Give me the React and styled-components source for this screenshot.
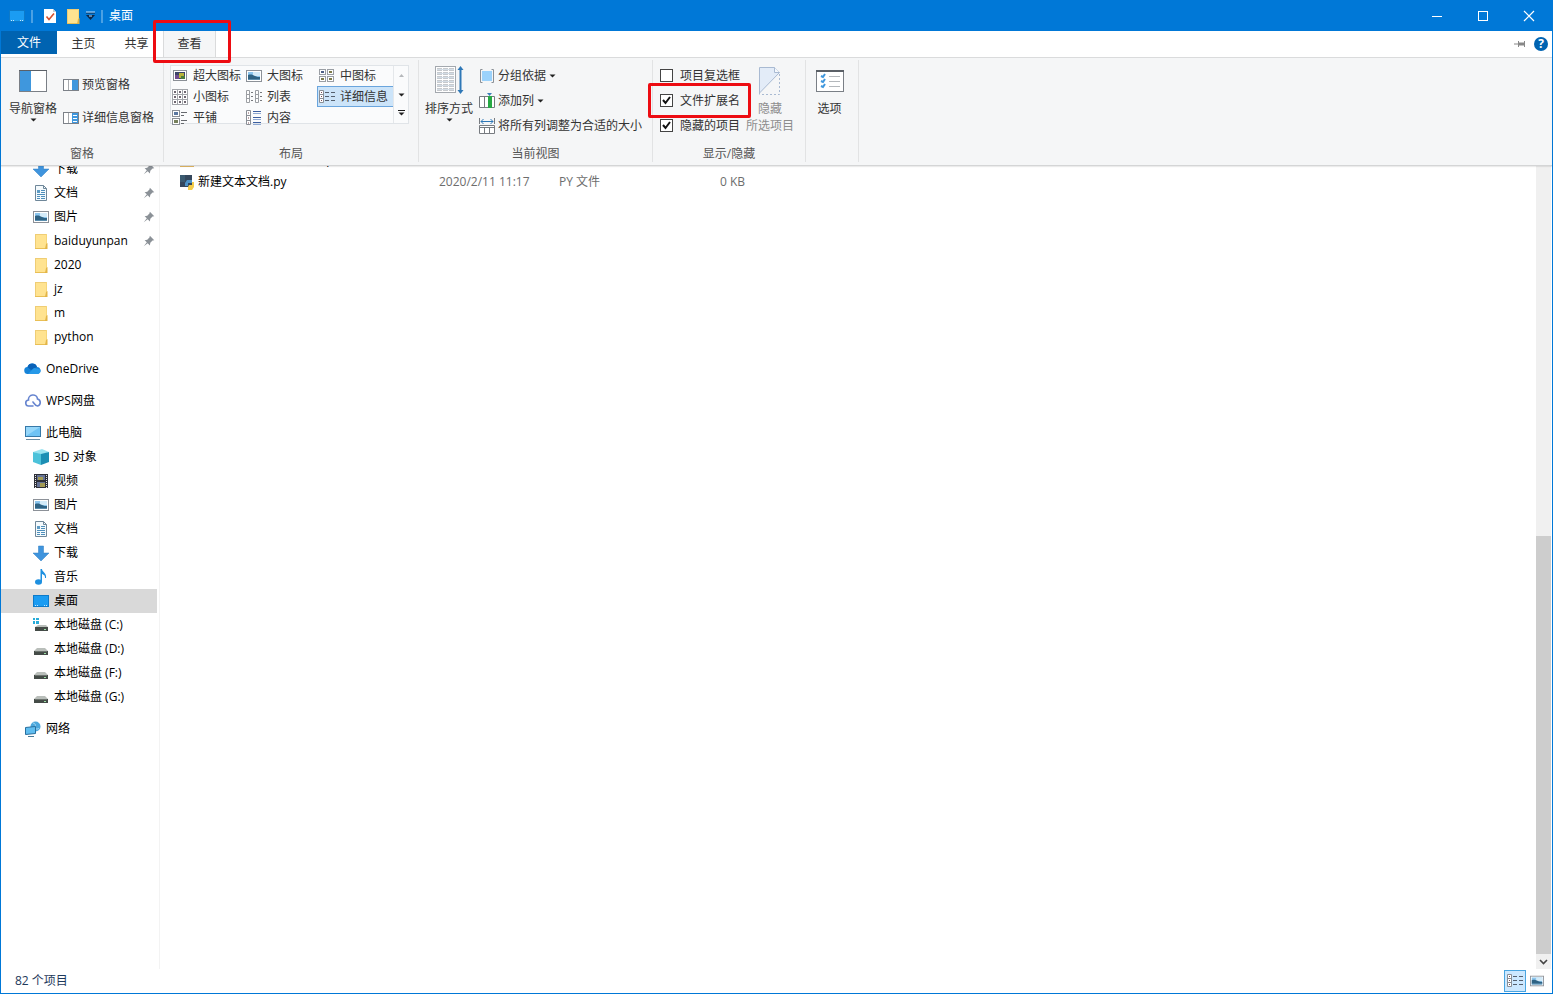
import { useState } from 'react';
import styled, { createGlobalStyle } from 'styled-components';

const views = [
    { id: 'huge', label: '超大图标', icon: 'picture' },
    { id: 'large', label: '大图标', icon: 'landscape' },
    { id: 'medium', label: '中图标', icon: 'medium' },
    { id: 'small', label: '小图标', icon: 'small' },
    { id: 'list', label: '列表', icon: 'list' },
    { id: 'details', label: '详细信息', icon: 'details' },
    { id: 'tiles', label: '平铺', icon: 'tiles' },
    { id: 'content', label: '内容', icon: 'content' },
];

const navGroups = [
    [
        { label: '下载', icon: 'download', pinned: true, child: true },
        { label: '文档', icon: 'document', pinned: true, child: true },
        { label: '图片', icon: 'landscape', pinned: true, child: true },
        { label: 'baiduyunpan', icon: 'folder', pinned: true, child: true },
        { label: '2020', icon: 'folder', child: true },
        { label: 'jz', icon: 'folder', child: true },
        { label: 'm', icon: 'folder', child: true },
        { label: 'python', icon: 'folder', child: true },
    ],
    [{ label: 'OneDrive', icon: 'onedrive' }],
    [{ label: 'WPS网盘', icon: 'wps' }],
    [
        { label: '此电脑', icon: 'computer' },
        { label: '3D 对象', icon: 'cube', child: true },
        { label: '视频', icon: 'video', child: true },
        { label: '图片', icon: 'landscape', child: true },
        { label: '文档', icon: 'document', child: true },
        { label: '下载', icon: 'download', child: true },
        { label: '音乐', icon: 'music', child: true },
        { label: '桌面', icon: 'desktop', child: true, active: true },
        { label: '本地磁盘 (C:)', icon: 'systemDisk', child: true },
        { label: '本地磁盘 (D:)', icon: 'disk', child: true },
        { label: '本地磁盘 (F:)', icon: 'disk', child: true },
        { label: '本地磁盘 (G:)', icon: 'disk', child: true },
    ],
    [{ label: '网络', icon: 'network' }],
];

const files = [
    {
        name: '学习资料汇总2_demo.zip',
        icon: 'zip',
        date: '2020/2/10 20:45',
        type: 'ZIP 压缩文件',
        size: '6,201 KB',
    },
    {
        name: '新建文本文档.py',
        icon: 'python',
        date: '2020/2/11 11:17',
        type: 'PY 文件',
        size: '0 KB',
    },
];

// all of these are drawn on a 16x16 grid
const drawings = {
    picture: (
        <>
            <rect x="1.5" y="2.5" width="13" height="10" fill="#fff" stroke="#8a8f96" />
            <rect x="3" y="4" width="10" height="7" fill="#3c4468" />
            <path d="M3 7h4v4H3z" fill="#6f4a8c" />
            <path d="M7 5h5v5H7z" fill="#b8b43a" />
            <path d="M9 8h4v3H9z" fill="#4c7c3c" />
        </>
    ),
    landscape: (
        <>
            <rect x="0.5" y="2.5" width="15" height="11" fill="#fff" stroke="#8c9198" />
            <rect x="2" y="4" width="12" height="8" fill="#8cc6ee" />
            <path d="M7 4h7v4H7z" fill="#d3ebf9" />
            <path d="M2 7c3-1 5 0 7 1s3 1 5 1v2H2z" fill="#2f6384" />
            <path d="M2 11h12v1H2z" fill="#5b8eae" />
        </>
    ),
    medium: (
        <>
            {[1, 9].map((x) =>
                [1, 8].map((y) => (
                    <g key={`${x}-${y}`}>
                        <rect x={x - 0.5} y={y + 0.5} width="6" height="5" fill="#fff" stroke="#9a9ea4" />
                        <path d={`M${x + 1} ${y + 2}h3v2h-3z`} fill={x === y ? '#4d5f86' : '#7d7a4a'} />
                    </g>
                ))
            )}
        </>
    ),
    small: (
        <>
            {[0, 5, 10].map((x) =>
                [0, 5, 10].map((y) => (
                    <g key={`${x}-${y}`}>
                        <rect x={x + 0.5} y={y + 0.5} width="5" height="5" fill="#fff" stroke="#a3a6ab" />
                        <path d={`M${x + 2} ${y + 2}h2v2h-2z`} fill="#6e6671" />
                    </g>
                ))
            )}
        </>
    ),
    list: (
        <>
            {[0, 9].map((x) => (
                <g key={x}>
                    <path
                        d={`M${x + 0.5} 1.5h3v12h-3zM${x + 0.5} 5.5h3M${x + 0.5} 9.5h3`}
                        fill="#fff"
                        stroke="#9b9ea3"
                    />
                    <path d={`M${x + 5} 3.5h2M${x + 5} 7.5h2M${x + 5} 11.5h2`} stroke="#77797d" />
                </g>
            ))}
        </>
    ),
    details: (
        <>
            <path d="M0.5 1.5h4v12h-4zM0.5 5.5h4M0.5 9.5h4" fill="#fff" stroke="#8a8f96" />
            <path d="M2 3.5h1M2 7.5h1M2 11.5h1" stroke="#7b4d54" />
            <path d="M6 3.5h4M6 7.5h4M6 11.5h4M12 3.5h4M12 7.5h4M12 11.5h4" stroke="#55606e" />
        </>
    ),
    tiles: (
        <>
            <rect x="0.5" y="0.5" width="7" height="6" fill="#fff" stroke="#8a8f96" />
            <rect x="0.5" y="8.5" width="7" height="6" fill="#fff" stroke="#8a8f96" />
            <path d="M2 2h4v3H2z" fill="#5a77a0" />
            <path d="M2 10h4v3H2z" fill="#77815c" />
            <path d="M9 2.5h6M9 5.5h3M9 10.5h6M9 13.5h3" stroke="#66696e" />
        </>
    ),
    content: (
        <>
            <path d="M0.5 0.5h4v14h-4zM0.5 5.5h4M0.5 10.5h4" fill="#fff" stroke="#8a8f96" />
            <path d="M2 3h1M2 8h1M2 13h1" stroke="#7b4d54" />
            <path d="M7 1.5h8M7 7.5h8M7 12.5h8" stroke="#3c5fa0" />
            <path d="M7 3.5h8M7 9.5h8M7 14.5h8" stroke="#8fa9d3" />
        </>
    ),
    previewPane: (
        <>
            <rect x="0.5" y="2.5" width="15" height="11" fill="#fff" stroke="#7c8188" />
            <path d="M5.5 3v10" stroke="#a8abaf" />
            <path d="M9 3h6v10H9z" fill="#3f97dd" />
        </>
    ),
    detailsPane: (
        <>
            <rect x="0.5" y="2.5" width="15" height="11" fill="#fff" stroke="#7c8188" />
            <path d="M5.5 3v10" stroke="#a8abaf" />
            <path d="M9 3h6v10H9z" fill="#3f97dd" />
            <path d="M10 5.5h4M10 8.5h4M10 11.5h4" stroke="#fff" />
        </>
    ),
    groupBy: (
        <>
            <path d="M3.5 1.5h-2v13h2M12.5 1.5h2v13h-2" fill="none" stroke="#8a9097" />
            <rect x="3" y="3" width="10" height="10" fill="#9bd2fb" />
        </>
    ),
    addColumn: (
        <>
            <path d="M0.5 3.5h15v11h-15zM5.5 4v10" fill="#fff" stroke="#777b80" />
            <path d="M9 3h4v12H9z" fill="#27a844" />
            <path d="M8 0h5l-2.5 3z" fill="#3d7fb8" />
        </>
    ),
    fitColumns: (
        <>
            <path d="M0.5 0v6M15.5 0v6" stroke="#777b80" />
            <path d="M2 3.5h12M4.5 1L2 3.5 4.5 6M11.5 1L14 3.5 11.5 6" fill="none" stroke="#2f78b7" />
            <path d="M0.5 7.5h15v8h-15zM0.5 9.5h15M5.5 9.5v6M10.5 9.5v6" fill="#fff" stroke="#777b80" />
        </>
    ),
    folder: (
        <>
            <path d="M2 1h12v15H2z" fill="#ffe390" />
            <path d="M2.5 1v15M2 1.5h11" stroke="#efcd75" />
            <path d="M2 15.5h11" stroke="#e9bf55" />
            <path d="M13.5 1v10" stroke="#f6d679" />
            <path d="M13 11l1.500-1v6H12z" fill="#e3b546" />
        </>
    ),
    download: (
        <path d="M5.5 1h5v7H16l-8 8-8-8h5.5z" fill="#3f94dd" stroke="#2c7cc2" strokeWidth="0.5" />
    ),
    document: (
        <>
            <path d="M2.5 0.5h8l3 3v12h-11z" fill="#f4fafd" stroke="#6f8799" />
            <path d="M10.5 0.5v3h3" fill="none" stroke="#6f8799" />
            <path d="M4 5h3v3H4z" fill="#5d9bc4" />
            <path d="M8 5.5h4M8 7.5h4M4 9.5h8M4 11.5h3M8 11.5h4M4 13.5h3M8 13.5h4" stroke="#4f8fbb" />
        </>
    ),
    onedrive: (
        <>
            <path d="M3 13a3.500 3.500 0 0 1-.5-7A5 5 0 0 1 12 6a3.600 3.600 0 0 1 1 7z" fill="#1683d8" />
            <path d="M2.500 6A5 5 0 0 1 12 6L6 9z" fill="#0a62b8" />
            <path d="M3 13h10a3.500 3.500 0 0 0 2.500-4.500L9 7z" fill="#2799e8" />
        </>
    ),
    wps: (
        <path
            d="M8 13H4a3 3 0 0 1-.5-6 4.500 4.500 0 0 1 9-1 3.600 3.600 0 0 1 0 7c-2 0-3-2-4.500-4"
            fill="none"
            stroke="#6684cf"
            strokeWidth="1.600"
            strokeLinecap="round"
        />
    ),
    computer: (
        <>
            <rect x="0.5" y="1.500" width="15" height="10" fill="#6fc3f4" stroke="#3779a8" />
            <path d="M1 2h14L1 11z" fill="#96d7fa" />
            <path d="M1 14.500h14" stroke="#6a8da4" />
        </>
    ),
    cube: (
        <>
            <path d="M0 3l9-3 7 3-7 3z" fill="#9ae3f0" />
            <path d="M0 3l8 2v11l-8-3z" fill="#4cc2da" />
            <path d="M8 5l8-2v10l-8 3z" fill="#1c8fb4" />
        </>
    ),
    video: (
        <>
            <path d="M1 1h14v14H1z" fill="#2e3038" />
            <path d="M4 2h8v5H4zM4 9h8v5H4z" fill="#667396" />
            <path d="M5 4h5v3H5zM7 10h5v4H7z" fill="#a39b54" />
            <path d="M2.500 2v13M13.500 2v13" stroke="#e8e8ea" strokeDasharray="1 1" />
        </>
    ),
    music: (
        <>
            <path d="M7.500 0h1.500c0 3 5 4 4 9h-1c0-3-1-3-3-4v8h-1.500z" fill="#1e90e0" />
            <ellipse cx="5.500" cy="13" rx="3.500" ry="2.700" fill="#1e90e0" />
        </>
    ),
    desktop: (
        <>
            <rect x="0.5" y="2.500" width="15" height="11" fill="#1b9cf2" stroke="#0d7ac9" />
            <path d="M2 12.500h1M4 12.500h1M11 12.500h1M13 12.500h1" stroke="#c5e8ff" />
        </>
    ),
    disk: (
        <>
            <path d="M4 7h8l3 3H1z" fill="#b9beba" />
            <rect x="1" y="10" width="14" height="4" fill="#444b47" />
            <path d="M11 12h2v1h-2z" fill="#9ce0a4" />
            <path d="M2 10.500h12" stroke="#6d746f" />
        </>
    ),
    systemDisk: (
        <>
            <path d="M5 8h8l2 2H2z" fill="#b9beba" />
            <rect x="2" y="10" width="13" height="4" fill="#444b47" />
            <path d="M11 12h2v1h-2z" fill="#9ce0a4" />
            <path d="M0 1h2v2H0zM3 1h3v2H3zM0 4h2v3H0zM3 4h3v3H3z" fill="#29acd9" />
        </>
    ),
    network: (
        <>
            <circle cx="10.500" cy="5.500" r="5" fill="#4ba7dc" />
            <path d="M8 2c2 0 3 2 2 4s3 3 4 1" fill="none" stroke="#a9daf3" />
            <path d="M0.500 6.500l10-1v7l-10 1z" fill="#5fbdf0" stroke="#286f9e" />
            <path d="M3 15.500h6" stroke="#477a98" />
        </>
    ),
    python: (
        <>
            <path d="M1 1h12v12H1z" fill="#34475c" />
            <path d="M1 1h5v7H1z" fill="#3a5a70" />
            <path d="M8 6h5v3H9v3H6V9z" fill="#4c92c6" />
            <path d="M10 11h3V8h2v5l-2 3h-4v-3z" fill="#f3cc4b" />
        </>
    ),
    zip: (
        <>
            <path d="M1 1h14v14H1z" fill="#e9bd68" />
            <path d="M1 5h14v4H1z" fill="#5a8e4e" />
        </>
    ),
    titlePaper: (
        <>
            <path d="M2 1h9l3 3v11H2z" fill="#fff" />
            <path d="M11 1v3h3z" fill="#c9cdd2" />
            <path d="M4.500 8.500l2.500 3 5-6" fill="none" stroke="#d5502f" strokeWidth="1.600" />
        </>
    ),
    pin: (
        <path
            d="M9 2l5 5-2 .5L9.500 10l-.5 3-2.500-2.500L2 14l3.500-4.500L3 7l3-.5L8.500 4z"
            fill="#8b9197"
        />
    ),
};

function Icon({ name, size = 16 }) {
    return (
        <Svg width={size} height={size} viewBox="0 0 16 16" aria-hidden="true">
            {drawings[name]}
        </Svg>
    );
}

function Arrow({ up, bar, dim }) {
    return (
        <Svg width="7" height="7" viewBox="0 0 7 7" aria-hidden="true">
            {bar && <path d="M0 0.5h7" stroke="currentColor" />}
            <path d={up ? 'M1 5h5L3.500 2z' : 'M0.500 2.500h6l-3 3z'} fill={dim ? '#b5b8bb' : '#222'} />
        </Svg>
    );
}

function TitleBar() {
    return (
        <Title>
            <QuickAccess>
                <Icon name="desktop" />
                <Divider />
                <QuickButton aria-label="属性">
                    <Icon name="titlePaper" />
                </QuickButton>
                <QuickButton aria-label="新建文件夹">
                    <Icon name="folder" />
                </QuickButton>
                <QuickButton aria-label="自定义快速访问工具栏" $narrow>
                    <Svg width="9" height="8" viewBox="0 0 9 8">
                        <path d="M0 1h9" stroke="#0b2747" />
                        <path d="M0 3h9L4.500 8z" fill="#0b2747" />
                        <path d="M0 0h9M3 4h3" stroke="#bfe0ff" />
                    </Svg>
                </QuickButton>
                <Divider />
            </QuickAccess>
            <h1>桌面</h1>
            <WindowButton aria-label="最小化">
                <Svg width="10" height="10" viewBox="0 0 10 10">
                    <path d="M0 5.500h10" stroke="#fff" />
                </Svg>
            </WindowButton>
            <WindowButton aria-label="最大化">
                <Svg width="10" height="10" viewBox="0 0 10 10">
                    <rect x="0.500" y="0.500" width="9" height="9" fill="none" stroke="#fff" />
                </Svg>
            </WindowButton>
            <WindowButton aria-label="关闭">
                <Svg width="10" height="10" viewBox="0 0 10 10">
                    <path d="M0 0l10 10M10 0L0 10" stroke="#fff" strokeWidth="1.200" />
                </Svg>
            </WindowButton>
        </Title>
    );
}

function TabBar() {
    return (
        <Tabs>
            <FileTab>文件</FileTab>
            <Tab>主页</Tab>
            <Tab>共享</Tab>
            <Tab $active>
                查看
                <TabMark />
            </Tab>
            <TabTools>
                <ToolButton aria-label="固定功能区">
                    <Svg width="12" height="8" viewBox="0 0 12 8">
                        <path d="M0 4h4M4.500 1v6M5 3h5v2H5zM10.500 1v6" fill="#888" stroke="#888" />
                    </Svg>
                </ToolButton>
                <ToolButton aria-label="帮助">
                    <HelpMark>?</HelpMark>
                </ToolButton>
            </TabTools>
        </Tabs>
    );
}

function Ribbon() {
    const [view, setView] = useState('details');
    const [checks, setChecks] = useState({ boxes: false, extensions: true, hidden: true });

    function toggle(key) {
        setChecks({ ...checks, [key]: !checks[key] });
    }

    return (
        <RibbonBar>
            <Group>
                <GroupBody>
                    <BigButton $width={64}>
                        <Svg width="28" height="30" viewBox="0 0 28 30">
                            <rect x="0.500" y="4.500" width="27" height="21" fill="#fff" stroke="#7a7f86" />
                            <path d="M1 5h11v20H1z" fill="#3f97dd" />
                            <path d="M0 4.500h28" stroke="#5b6067" />
                        </Svg>
                        导航窗格
                        <Arrow />
                    </BigButton>
                    <PaneButtons>
                        <SmallButton>
                            <Icon name="previewPane" />
                            预览窗格
                        </SmallButton>
                        <SmallButton>
                            <Icon name="detailsPane" />
                            详细信息窗格
                        </SmallButton>
                    </PaneButtons>
                </GroupBody>
                <GroupName>窗格</GroupName>
            </Group>

            <Group>
                <GroupBody>
                    <Gallery>
                        <GalleryItems>
                            {views.map((item) => (
                                <GalleryItem
                                    key={item.id}
                                    $active={view === item.id}
                                    onClick={() => setView(item.id)}
                                >
                                    <Icon name={item.icon} />
                                    {item.label}
                                </GalleryItem>
                            ))}
                        </GalleryItems>
                        <GalleryScroll>
                            <button aria-label="上一行">
                                <Arrow up dim />
                            </button>
                            <button aria-label="下一行">
                                <Arrow />
                            </button>
                            <button aria-label="更多">
                                <Arrow bar />
                            </button>
                        </GalleryScroll>
                    </Gallery>
                </GroupBody>
                <GroupName>布局</GroupName>
            </Group>

            <Group>
                <GroupBody>
                    <BigButton $width={60}>
                        <Svg width="28" height="30" viewBox="0 0 28 30">
                            <rect x="0.500" y="0.500" width="20" height="26" fill="#fff" stroke="#a3a8ae" />
                            <path
                                d="M2 3.500h17M2 7.500h17M2 11.500h17M2 15.500h17M2 19.500h17M2 23.500h17"
                                stroke="#8d949b"
                                strokeWidth="2"
                                strokeDasharray="5 1"
                            />
                            <path
                                d="M2 3.500h17M2 7.500h17M2 11.500h17M2 15.500h17M2 19.500h17M2 23.500h17"
                                stroke="#d3dde6"
                            />
                            <path d="M25.500 2v24" stroke="#2f78b7" strokeWidth="2" />
                            <path d="M22.500 4l3-4 3 4zM22.500 24l3 4 3-4z" fill="#2f78b7" />
                        </Svg>
                        排序方式
                        <Arrow />
                    </BigButton>
                    <Stack>
                        <SmallButton>
                            <Icon name="groupBy" />
                            分组依据
                            <Arrow />
                        </SmallButton>
                        <SmallButton>
                            <Icon name="addColumn" />
                            添加列
                            <Arrow />
                        </SmallButton>
                        <SmallButton>
                            <Icon name="fitColumns" />
                            将所有列调整为合适的大小
                        </SmallButton>
                    </Stack>
                </GroupBody>
                <GroupName>当前视图</GroupName>
            </Group>

            <Group>
                <GroupBody>
                    <Stack>
                        <CheckLabel>
                            <input type="checkbox" checked={checks.boxes} onChange={() => toggle('boxes')} />
                            项目复选框
                        </CheckLabel>
                        <CheckLabel>
                            <input
                                type="checkbox"
                                checked={checks.extensions}
                                onChange={() => toggle('extensions')}
                            />
                            文件扩展名
                            <CheckMark />
                        </CheckLabel>
                        <CheckLabel>
                            <input type="checkbox" checked={checks.hidden} onChange={() => toggle('hidden')} />
                            隐藏的项目
                        </CheckLabel>
                    </Stack>
                    <BigButton $width={60} disabled>
                        <Svg width="28" height="30" viewBox="0 0 28 30">
                            <path d="M3.500 28V1.500h15l5 5L3.500 27z" fill="#e3ecf8" stroke="#a9bad2" />
                            <path d="M18.500 1.500v5h5" fill="#f5f8fc" stroke="#a9bad2" />
                            <path d="M23.500 8v20.500h-20" fill="none" stroke="#a9bad2" strokeDasharray="2 2" />
                        </Svg>
                        隐藏
                        <span>所选项目</span>
                    </BigButton>
                </GroupBody>
                <GroupName>显示/隐藏</GroupName>
            </Group>

            <Group>
                <GroupBody>
                    <BigButton $width={47}>
                        <Svg width="28" height="30" viewBox="0 0 28 30">
                            <rect x="0.500" y="4.500" width="27" height="21" fill="#fff" stroke="#7a7f86" />
                            <path d="M0 5h28" stroke="#5b6067" strokeWidth="2" />
                            <path
                                d="M5 10l2 1 2-3M5 15l2 1 2-3M5 20l2 1 2-3"
                                fill="none"
                                stroke="#3f97dd"
                                strokeWidth="2"
                            />
                            <path d="M13 10.500h11M13 15.500h11M13 20.500h11" stroke="#b4b8bc" />
                        </Svg>
                        选项
                    </BigButton>
                </GroupBody>
            </Group>
        </RibbonBar>
    );
}

function NavPane() {
    return (
        <Nav>
            <NavList>
                {navGroups.map((group) => (
                    <NavGroup key={group[0].label}>
                        {group.map((item) => (
                            <NavItem key={item.label} href="#" $child={item.child} $active={item.active}>
                                <Icon name={item.icon} />
                                <span>{item.label}</span>
                                {item.pinned && <Icon name="pin" size={14} />}
                            </NavItem>
                        ))}
                    </NavGroup>
                ))}
            </NavList>
        </Nav>
    );
}

function FileList() {
    return (
        <FilePane>
            <FileTable>
                <tbody>
                    {files.map((file) => (
                        <tr key={file.name}>
                            <NameCell>
                                <div>
                                    <Icon name={file.icon} />
                                    {file.name}
                                </div>
                            </NameCell>
                            <Cell $width={120}>{file.date}</Cell>
                            <Cell $width={106}>{file.type}</Cell>
                            <Cell $width={80} $right>
                                {file.size}
                            </Cell>
                        </tr>
                    ))}
                </tbody>
            </FileTable>
        </FilePane>
    );
}

export default function App() {
    return (
        <Window>
            <GlobalStyle />
            <TitleBar />
            <TabBar />
            <Ribbon />
            <Main>
                <NavPane />
                <FileList />
                <ScrollTrack>
                    <ScrollThumb />
                    <ScrollButton aria-label="向下滚动">
                        <Svg width="9" height="6" viewBox="0 0 9 6">
                            <path d="M1 1l3.500 3.500L8 1" fill="none" stroke="#444" strokeWidth="1.600" />
                        </Svg>
                    </ScrollButton>
                </ScrollTrack>
            </Main>
            <StatusBar>
                <p>82 个项目</p>
                <StatusButton aria-label="详细信息" $active>
                    <Icon name="details" />
                </StatusButton>
                <StatusButton aria-label="大图标">
                    <Icon name="landscape" size={14} />
                </StatusButton>
            </StatusBar>
        </Window>
    );
}

const GlobalStyle = createGlobalStyle`
    * {
        box-sizing: border-box;
        margin: 0;
        padding: 0;
    }

    body {
        font-family: 'Open Sans', 'Noto Sans CJK SC', sans-serif;
        font-size: 12px;
        line-height: 16px;
        color: #1a1a1a;
        background: #ffffff;
    }

    button {
        font: inherit;
        color: inherit;
        background: none;
        border: none;
    }
`;

const Svg = styled.svg`
    display: block;
    flex-shrink: 0;
    overflow: visible;
`;

const Window = styled.div`
    display: flex;
    flex-direction: column;
    height: 100vh;
    border: 1px solid #0078d7;
    background: #ffffff;
`;

const Title = styled.header`
    display: flex;
    align-items: center;
    height: 30px;
    flex-shrink: 0;
    background: #0078d7;
    color: #ffffff;

    h1 {
        flex: 1;
        font-size: 12px;
        font-weight: 400;
    }
`;

const QuickAccess = styled.div`
    display: flex;
    align-items: center;
    padding: 0 4px 0 8px;
`;

const Divider = styled.i`
    width: 2px;
    height: 13px;
    margin: 0 2px 0 6px;
    background: #4ba1e4;
`;

const QuickButton = styled.button`
    display: flex;
    justify-content: center;
    width: ${({ $narrow }) => ($narrow ? 9 : 16)}px;
    margin-left: ${({ $narrow }) => ($narrow ? 5 : 7)}px;
`;

const WindowButton = styled.button`
    display: flex;
    align-items: center;
    justify-content: center;
    width: 46px;
    height: 30px;
`;

const Tabs = styled.nav`
    display: flex;
    height: 27px;
    flex-shrink: 0;
    border-bottom: 1px solid #dadbdc;
`;

const Tab = styled.button`
    position: relative;
    width: 53px;
    color: #333333;
    background: ${({ $active }) => ($active ? '#f5f6f7' : 'none')};
    border: solid ${({ $active }) => ($active ? '#dadbdc' : 'transparent')};
    border-width: 0 1px;
`;

const FileTab = styled(Tab)`
    width: 56px;
    height: 23px;
    color: #ffffff;
    background: #0063b1;
    border: none;
`;

// red frames that point at the settings to change
const Mark = styled.span`
    position: absolute;
    border: 3px solid #ed0c12;
    border-radius: 2px;
    pointer-events: none;
    z-index: 2;
`;

const TabMark = styled(Mark)`
    inset: -11px -16px -6px -11px;
`;

const CheckMark = styled(Mark)`
    inset: -5px -11px -5px -12px;
`;

const TabTools = styled.div`
    display: flex;
    align-items: center;
    gap: 8px;
    margin-left: auto;
    padding-right: 4px;
`;

const ToolButton = styled.button`
    display: flex;
`;

const HelpMark = styled.span`
    width: 14px;
    height: 14px;
    border-radius: 50%;
    background: #0063b1;
    color: #ffffff;
    font-weight: 700;
    line-height: 14px;
`;

const RibbonBar = styled.section`
    position: relative;
    display: flex;
    height: 108px;
    flex-shrink: 0;
    background: #f5f6f7;
    border-bottom: 1px solid #d4d5d6;
    box-shadow: 0 1px 1px rgba(0, 0, 0, 0.08);
    z-index: 1;
`;

const Group = styled.div`
    display: flex;
    flex-direction: column;
    justify-content: space-between;
    margin: 2px 0 3px;
    border-right: 1px solid #e2e3e4;
`;

const GroupBody = styled.div`
    display: flex;
    align-items: flex-start;
    padding: 3px 5px 0 0;
`;

const GroupName = styled.p`
    text-align: center;
    color: #555555;
`;

const BigButton = styled.button`
    display: flex;
    flex-direction: column;
    align-items: center;
    width: ${({ $width }) => $width}px;
    height: 72px;
    padding-top: 3px;
    line-height: 14px;
    white-space: nowrap;
    color: ${({ disabled }) => (disabled ? '#8d8d8d' : '#333333')};

    ${Svg}:first-child {
        margin-bottom: 6px;
    }

    span {
        padding-top: 3px;
    }
`;

const Stack = styled.div`
    display: flex;
    flex-direction: column;
    align-items: flex-start;
`;

const PaneButtons = styled(Stack)`
    gap: 8px;
    padding-top: 9px;
    margin: 0 -1px 0 -2px;
`;

const SmallButton = styled.button`
    display: flex;
    align-items: center;
    gap: 3px;
    height: 25px;
    padding-right: 5px;
    white-space: nowrap;
    color: #333333;
`;

const CheckLabel = styled.label`
    position: relative;
    display: flex;
    align-items: center;
    gap: 7px;
    height: 25px;
    margin-left: 7px;
    white-space: nowrap;
    color: #333333;

    input {
        appearance: none;
        width: 13px;
        height: 13px;
        border: 1px solid #444444;
        background: #ffffff;
    }

    input:checked {
        background: #ffffff
            url("data:image/svg+xml,%3Csvg xmlns='http://www.w3.org/2000/svg' viewBox='0 0 11 11'%3E%3Cpath d='M2 5l2.500 3L9 2' fill='none' stroke='%23111' stroke-width='2'/%3E%3C/svg%3E");
    }
`;

const Gallery = styled.div`
    display: flex;
    height: 59px;
    margin: 2px 4px 0 6px;
    border: 1px solid #e0e4e8;
    background: #fafbfc;
`;

const GalleryItems = styled.div`
    display: grid;
    grid-template-columns: 74px 73px 75px;
    grid-auto-rows: 19px;
    row-gap: 2px;
`;

const GalleryItem = styled.button`
    display: flex;
    align-items: center;
    gap: 5px;
    padding-left: 1px;
    white-space: nowrap;
    color: #333333;
    background: ${({ $active }) => ($active ? '#cce4f9' : 'none')};
    outline: ${({ $active }) => ($active ? '1px solid #6aa5dd' : 'none')};
`;

const GalleryScroll = styled.div`
    display: flex;
    flex-direction: column;
    width: 15px;
    border-left: 1px solid #e4e7ea;

    button {
        display: flex;
        flex: 1;
        align-items: center;
        justify-content: center;
    }
`;

const Main = styled.main`
    display: flex;
    flex: 1;
    min-height: 0;
    overflow: hidden;
`;

const Nav = styled.nav`
    width: 159px;
    flex-shrink: 0;
    overflow: hidden;
    border-right: 1px solid #f3f3f3;
`;

// the pane is scrolled, its first row is cut by the ribbon
const NavList = styled.div`
    display: flex;
    flex-direction: column;
    gap: 8px;
    margin-top: -9px;
`;

const NavGroup = styled.div`
    display: flex;
    flex-direction: column;
`;

const NavItem = styled.a`
    display: flex;
    align-items: center;
    gap: 5px;
    height: 24px;
    margin-right: 2px;
    padding: 0 1px 0 ${({ $child }) => ($child ? 32 : 24)}px;
    color: #000000;
    text-decoration: none;
    white-space: nowrap;
    background: ${({ $active }) => ($active ? '#d9d9d9' : 'none')};

    span {
        flex: 1;
    }
`;

const FilePane = styled.section`
    flex: 1;
    overflow: hidden;
`;

const FileTable = styled.table`
    margin: -17px 0 0 19px;
    border-collapse: collapse;
    table-layout: fixed;

    td {
        height: 22px;
        white-space: nowrap;
    }
`;

const NameCell = styled.td`
    width: 260px;
    color: #000000;

    div {
        display: flex;
        align-items: center;
        gap: 3px;
    }
`;

const Cell = styled.td`
    width: ${({ $width }) => $width}px;
    color: #6d6d6d;
    text-align: ${({ $right }) => ($right ? 'right' : 'left')};
`;

const ScrollTrack = styled.div`
    display: flex;
    flex-direction: column;
    justify-content: flex-end;
    width: 15px;
    margin-right: 1px;
    background: #f0f0f0;
`;

const ScrollThumb = styled.div`
    height: 52%;
    background: #cdcdcd;
`;

const ScrollButton = styled.button`
    display: flex;
    align-items: center;
    justify-content: center;
    height: 15px;
`;

const StatusBar = styled.footer`
    display: flex;
    align-items: center;
    height: 24px;
    flex-shrink: 0;
    padding: 0 4px 0 14px;
    color: #1e395b;

    p {
        flex: 1;
    }
`;

const StatusButton = styled.button`
    display: flex;
    align-items: center;
    justify-content: center;
    width: 22px;
    height: 22px;
    background: ${({ $active }) => ($active ? '#cce8ff' : 'none')};
    border: 1px solid ${({ $active }) => ($active ? '#4aa5e0' : 'transparent')};
`;
